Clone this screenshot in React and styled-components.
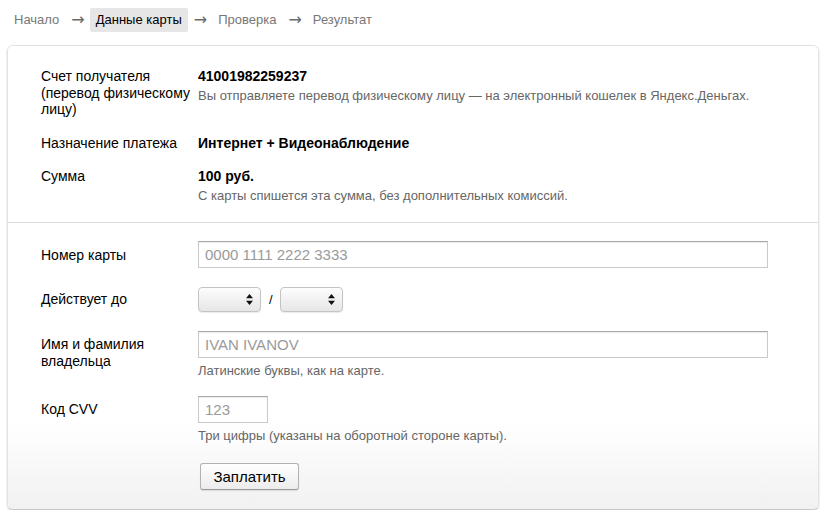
import React from 'react';
import styled, { createGlobalStyle } from 'styled-components';

const Global = createGlobalStyle`
  body {
    margin: 0;
    background: #fff;
    font-family: "Liberation Sans", Arial, Helvetica, sans-serif;
    font-size: 14px;
    color: #000;
  }
`;

const S = {
  Page: styled.div`
    padding: 8px 7px 0 7px;
  `,
  Crumbs: styled.nav`
    display: flex;
    align-items: center;
    height: 24px;
    padding-left: 7px;
    font-size: 13px;
    color: #777;
  `,
  Crumb: styled.span`
    padding: ${p => (p.$active ? '0 6px' : '0')};
    margin: ${p => (p.$active ? '0 -6px' : '0')};
    line-height: 24px;
    border-radius: 2px;
    background: ${p => (p.$active ? '#e6e6e6' : 'transparent')};
    color: ${p => (p.$active ? '#000' : '#777')};
  `,
  Arrow: styled.span`
    margin: 0 11px 0 12px;
    font-family: "DejaVu Sans", sans-serif;
    font-size: 16px;
    line-height: 24px;
    color: #6a6a6a;
  `,
  Card: styled.div`
    margin-top: 13px;
    width: 812px;
    box-sizing: border-box;
    border: 1px solid #e2e2e2;
    border-bottom-color: #c8c8c8;
    border-radius: 6px;
    box-shadow: 0 1px 2px rgba(0, 0, 0, 0.18);
    overflow: hidden;
  `,
  Info: styled.section`
    padding: 22px 0 19px 33px;
    border-bottom: 1px solid #dcdcdc;
    background: #fff;
  `,
  Form: styled.section`
    padding: 18px 0 19px 33px;
    background: linear-gradient(to bottom, #fff 0%, #fff 70%, #f1f1f1 100%);
  `,
  Row: styled.div`
    display: grid;
    grid-template-columns: 157px 1fr;
    margin-bottom: ${p => p.$gap || 0}px;
  `,
  Label: styled.div`
    line-height: 16.5px;
    padding-top: ${p => p.$top || 0}px;
  `,
  Value: styled.div`
    display: flex;
    flex-direction: column;
  `,
  Strong: styled.div`
    font-weight: bold;
    font-size: 14px;
    line-height: 16px;
  `,
  Note: styled.div`
    color: #666;
    font-size: 13px;
    line-height: 15px;
    margin-top: ${p => p.$top || 0}px;
  `,
  Input: styled.input`
    box-sizing: border-box;
    width: ${p => p.$w}px;
    height: 27px;
    padding: 0 6px;
    border: 1px solid #c9c9c9;
    border-top-color: #a8a8a8;
    box-shadow: inset 0 1px 1px rgba(0, 0, 0, 0.08);
    font-family: inherit;
    font-size: 15px;
    color: #000;
    outline: none;
    &::placeholder {
      color: #9a9a9a;
    }
  `,
  Dates: styled.div`
    display: flex;
    align-items: center;
  `,
  Select: styled.div`
    position: relative;
    box-sizing: border-box;
    width: 63px;
    height: 25px;
    border: 1px solid #c4c4c4;
    border-radius: 4px;
    background: linear-gradient(to bottom, #fdfdfd, #e6e6e6);
    box-shadow: 0 1px 1px rgba(0, 0, 0, 0.08);
  `,
  Updown: styled.svg`
    position: absolute;
    right: 7px;
    top: 6px;
  `,
  Slash: styled.span`
    margin: 0 7px 0 8px;
    font-size: 13px;
  `,
  Button: styled.button`
    box-sizing: border-box;
    margin-left: 2px;
    width: 99px;
    height: 27px;
    border: 1px solid #b2b2b2;
    border-bottom-color: #999;
    border-radius: 3px;
    background: linear-gradient(to bottom, #fff, #ececec);
    box-shadow: 0 1px 1px rgba(0, 0, 0, 0.1);
    font-family: inherit;
    font-size: 15px;
    color: #000;
  `,
};

const Picker = () => (
  <S.Select>
    <S.Updown width="7" height="11" viewBox="0 0 7 11">
      <path d="M3.5 0 L7 4.2 H0 Z M3.5 11 L0 6.8 H7 Z" fill="#111" />
    </S.Updown>
  </S.Select>
);

const App = () => (
  <>
    <Global />
    <S.Page>
      <S.Crumbs>
        <S.Crumb>Начало</S.Crumb>
        <S.Arrow>→</S.Arrow>
        <S.Crumb $active>Данные карты</S.Crumb>
        <S.Arrow>→</S.Arrow>
        <S.Crumb>Проверка</S.Crumb>
        <S.Arrow>→</S.Arrow>
        <S.Crumb>Результат</S.Crumb>
      </S.Crumbs>

      <S.Card>
        <S.Info>
          <S.Row $gap={17}>
            <S.Label>
              Счет получателя
              <br />
              (перевод физическому
              <br />
              лицу)
            </S.Label>
            <S.Value>
              <S.Strong>41001982259237</S.Strong>
              <S.Note $top={4}>
                Вы отправляете перевод физическому лицу — на электронный кошелек в Яндекс.Деньгах.
              </S.Note>
            </S.Value>
          </S.Row>
          <S.Row $gap={17}>
            <S.Label>Назначение платежа</S.Label>
            <S.Value>
              <S.Strong>Интернет + Видеонаблюдение</S.Strong>
            </S.Value>
          </S.Row>
          <S.Row>
            <S.Label>Сумма</S.Label>
            <S.Value>
              <S.Strong>100 руб.</S.Strong>
              <S.Note $top={4}>С карты спишется эта сумма, без дополнительных комиссий.</S.Note>
            </S.Value>
          </S.Row>
        </S.Info>

        <S.Form>
          <S.Row $gap={19}>
            <S.Label $top={6}>Номер карты</S.Label>
            <S.Value>
              <S.Input $w={570} placeholder="0000 1111 2222 3333" />
            </S.Value>
          </S.Row>
          <S.Row $gap={19}>
            <S.Label $top={4}>Действует до</S.Label>
            <S.Dates>
              <Picker />
              <S.Slash>/</S.Slash>
              <Picker />
            </S.Dates>
          </S.Row>
          <S.Row $gap={18}>
            <S.Label $top={5}>
              Имя и фамилия
              <br />
              владельца
            </S.Label>
            <S.Value>
              <S.Input $w={570} placeholder="IVAN IVANOV" />
              <S.Note $top={5}>Латинские буквы, как на карте.</S.Note>
            </S.Value>
          </S.Row>
          <S.Row $gap={20}>
            <S.Label $top={5}>Код CVV</S.Label>
            <S.Value>
              <S.Input $w={70} placeholder="123" />
              <S.Note $top={5}>Три цифры (указаны на оборотной стороне карты).</S.Note>
            </S.Value>
          </S.Row>
          <S.Row>
            <div />
            <div>
              <S.Button>Заплатить</S.Button>
            </div>
          </S.Row>
        </S.Form>
      </S.Card>
    </S.Page>
  </>
);

export default App;
